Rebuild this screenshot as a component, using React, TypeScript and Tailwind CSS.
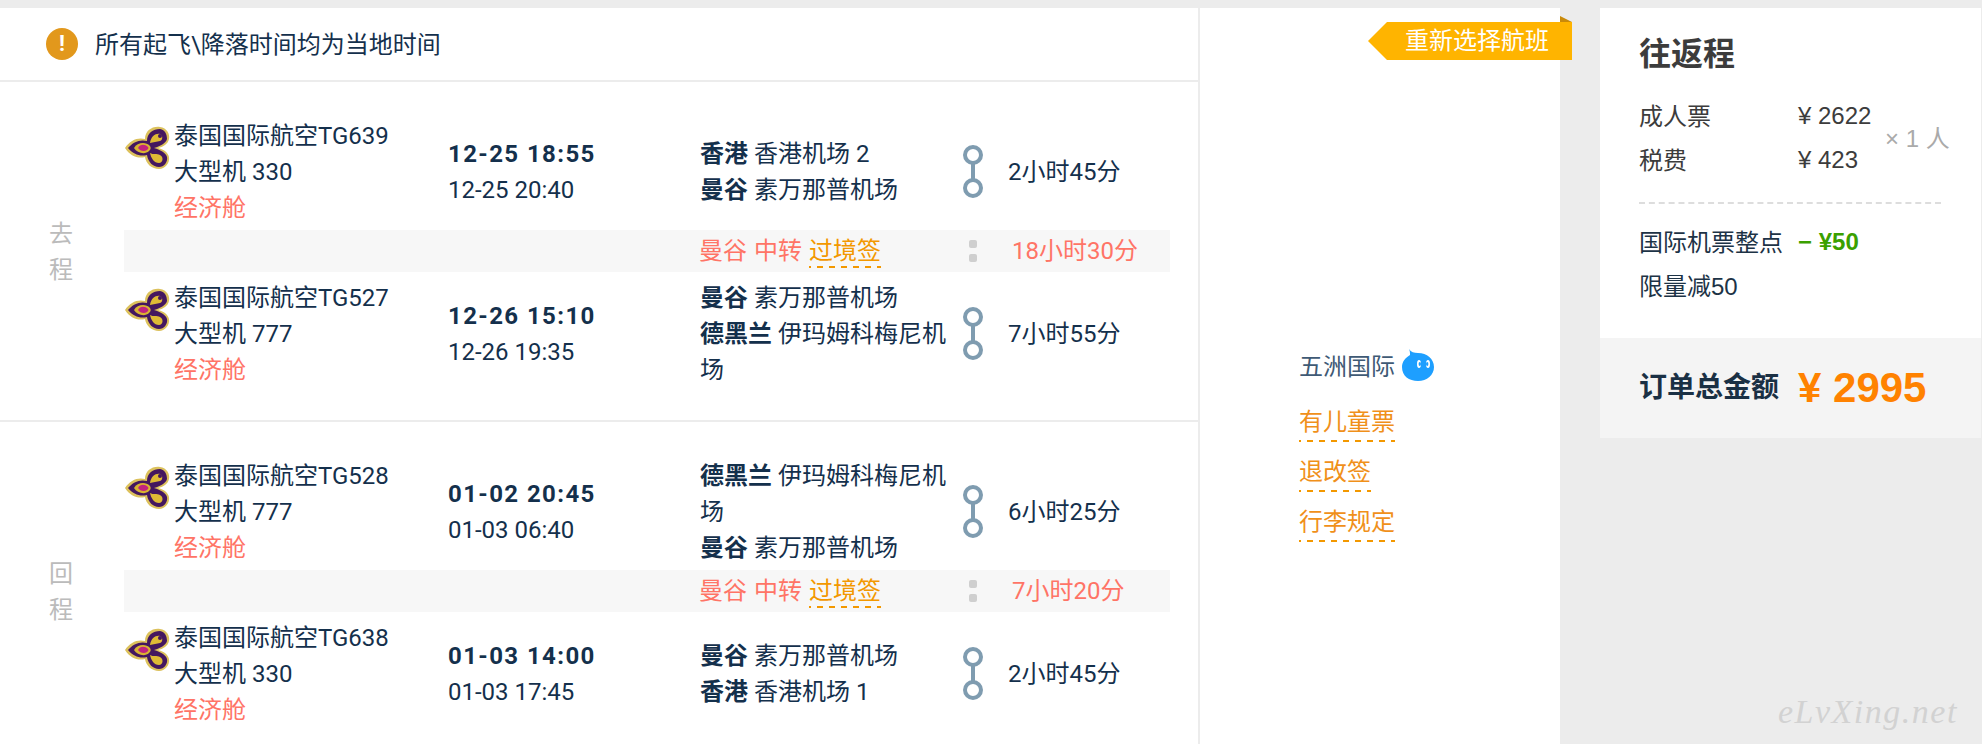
import React from "react";

const cjk = "font-['Roboto','Noto_Sans_CJK_SC',sans-serif]";
const navy = "text-[#14304c]";

const ThaiLogo = () => (
  <svg width="45" height="44" viewBox="0 0 45 44" className="mt-[9px] ml-[1px] shrink-0 blur-[0.5px]">
    <path
      d="M0 22C5 14 13 11 20 13C20 5 27 0 35 1C42 2 45 8 44 13C43 18 38 21 33 22C38 23 43 26 44 31C45 37 40 43 34 43C27 43 21 38 20 31C13 33 5 30 0 22Z"
      fill="#dcc15c"
    />
    <path
      d="M3 22C8 16 15 13 22 15C22 7 28 3 35 3C40 4 42 8 42 13C41 17 36 20 29 22C36 24 41 27 42 31C43 36 39 41 34 41C28 41 23 36 22 29C15 31 8 28 3 22Z"
      fill="#44175f"
    />
    <path d="M25 17C26 10 31 7 35 8C38 9 38 14 35 15C32 16 28 16 25 17Z" fill="#dfba35" />
    <circle cx="35" cy="10" r="2" fill="#44175f" />
    <path d="M25 27C28 29 32 27 35 29C39 31 38 37 34 37C29 37 26 32 25 27Z" fill="#dfba35" />
    <path d="M9 22C12 17 20 15 25 20C26 22 26 23 24 25C20 29 12 27 9 22Z" fill="#d9b331" />
    <path d="M13 22C15 18 20 18 23 21C24 22 23 23 22 24C19 26 15 25 13 22Z" fill="#c2247e" />
  </svg>
);

const Connector = () => (
  <svg width="20" height="53" viewBox="0 0 20 53" className="shrink-0 blur-[0.3px]">
    <circle cx="10" cy="10" r="8" fill="none" stroke="#7f9cb0" strokeWidth="4" />
    <circle cx="10" cy="43" r="8" fill="none" stroke="#7f9cb0" strokeWidth="4" />
    <path d="M10 18V35" stroke="#7f9cb0" strokeWidth="4" />
  </svg>
);

const Dash = () => (
  <div className="h-[2px] bg-[repeating-linear-gradient(90deg,#f39800_0,#f39800_2px,transparent_2px,transparent_8px,#f39800_8px,#f39800_12px)]" />
);

type Leg = {
  flight: string;
  plane: string;
  dep: string;
  arr: string;
  from: [string, string];
  to: [string, string];
  duration: string;
};

const LegRow = ({ leg }: { leg: Leg }) => (
  <div className={`flex h-[108px] ${navy}`}>
    <div className="flex w-[324px]">
      <div className="w-[50px] shrink-0">
        <ThaiLogo />
      </div>
      <div className="translate-y-px leading-[36px]">
        <div>泰国国际航空{leg.flight}</div>
        <div>大型机 {leg.plane}</div>
        <div className="text-[#ff7466]">经济舱</div>
      </div>
    </div>
    <div className="flex w-[252px] translate-y-px flex-col justify-center leading-[36px]">
      <div className="font-bold tracking-[1.4px]">{leg.dep}</div>
      <div>{leg.arr}</div>
    </div>
    <div className="flex w-[252px] translate-y-px flex-col justify-center leading-[36px]">
      <div>
        <b className="font-semibold">{leg.from[0]}</b> {leg.from[1]}
      </div>
      <div>
        <b className="font-semibold">{leg.to[0]}</b> {leg.to[1]}
      </div>
    </div>
    <div className="ml-[11px] flex items-center">
      <Connector />
    </div>
    <div className="ml-[25px] flex translate-y-px items-center">{leg.duration}</div>
  </div>
);

const Transfer = ({ duration }: { duration: string }) => (
  <div className="mt-[5px] mb-[7px] flex h-[42px] items-center bg-[#f7f7f7] text-[#ff7466]">
    <div className="ml-[575px] flex w-[253px]">
      <span className="mr-[7px]">曼谷</span>
      <span className="mr-[7px]">中转</span>
      <span className="relative text-[#f39800]">
        过境签
        <div className="absolute left-0 right-0 top-[33px]">
          <Dash />
        </div>
      </span>
    </div>
    <div className="ml-[17px] flex w-[8px] flex-col gap-[6px]">
      <div className="h-[8px] w-[8px] rounded-[2px] bg-[#cfcfcf]" />
      <div className="h-[8px] w-[8px] rounded-[2px] bg-[#cfcfcf]" />
    </div>
    <div className="ml-[35px]">{duration}</div>
  </div>
);

const Section = ({ label, legs, transfer }: { label: string[]; legs: Leg[]; transfer: string }) => (
  <div className="flex border-b-2 border-[#ececec] pt-[35px] pb-[33px]">
    <div className="flex w-[124px] flex-col items-center justify-center pr-[2px] leading-[36px] text-[#bbbbbb]">
      {label.map((c) => (
        <div key={c}>{c}</div>
      ))}
    </div>
    <div className="w-[1046px]">
      <LegRow leg={legs[0]} />
      <Transfer duration={transfer} />
      <LegRow leg={legs[1]} />
    </div>
  </div>
);

const outbound: Leg[] = [
  {
    flight: "TG639",
    plane: "330",
    dep: "12-25 18:55",
    arr: "12-25 20:40",
    from: ["香港", "香港机场 2"],
    to: ["曼谷", "素万那普机场"],
    duration: "2小时45分",
  },
  {
    flight: "TG527",
    plane: "777",
    dep: "12-26 15:10",
    arr: "12-26 19:35",
    from: ["曼谷", "素万那普机场"],
    to: ["德黑兰", "伊玛姆科梅尼机场"],
    duration: "7小时55分",
  },
];

const inbound: Leg[] = [
  {
    flight: "TG528",
    plane: "777",
    dep: "01-02 20:45",
    arr: "01-03 06:40",
    from: ["德黑兰", "伊玛姆科梅尼机场"],
    to: ["曼谷", "素万那普机场"],
    duration: "6小时25分",
  },
  {
    flight: "TG638",
    plane: "330",
    dep: "01-03 14:00",
    arr: "01-03 17:45",
    from: ["曼谷", "素万那普机场"],
    to: ["香港", "香港机场 1"],
    duration: "2小时45分",
  },
];

const links = ["有儿童票", "退改签", "行李规定"];

export default function App() {
  return (
    <div className={`relative flex h-[744px] w-[1982px] overflow-hidden bg-[#ececec] pt-[8px] text-[24px] ${cjk}`}>
      <div className="flex w-[1560px] bg-white">
        <div className="w-[1200px] border-r-2 border-[#ececec]">
          <div className={`flex h-[74px] items-center border-b-2 border-[#ececec] pl-[46px] ${navy}`}>
            <div className="flex h-[32px] w-[32px] items-center justify-center rounded-full bg-[#e2981c] text-[22px] font-bold leading-none text-white">
              !
            </div>
            <span className="ml-[17px] translate-y-px">所有起飞\降落时间均为当地时间</span>
          </div>
          <Section label={["去", "程"]} legs={outbound} transfer="18小时30分" />
          <Section label={["回", "程"]} legs={inbound} transfer="7小时20分" />
        </div>

        <div className="relative w-[360px] pl-[99px] pt-[341px]">
          <div className="absolute right-[-12px] top-[8px]">
            <svg width="204" height="44" viewBox="0 0 204 44" className="block">
              <path d="M192 0L204 6H192Z" fill="#c98a0a" />
              <path d="M0 25L19 6H204V44H19Z" fill="#ffb400" />
            </svg>
            <span className="absolute left-[37px] top-[7px] whitespace-nowrap leading-[36px] text-white">
              重新选择航班
            </span>
          </div>
          <div className="flex h-[36px] items-center leading-[36px] text-[#3f5a75]">
            五洲国际
            <svg width="33" height="32" viewBox="0 0 33 32" className="mb-[4px] ml-[6px]">
              <path
                d="M8 0C10 3 13 4 17 4C26 4 33 10 33 18C33 26 26 32 17 32C8 32 1 27 1 18C1 13 4 9 9 6C9 4 9 2 8 0Z"
                fill="#1e9fff"
              />
              <ellipse cx="18" cy="15" rx="2" ry="4" fill="#fff" />
              <ellipse cx="18.8" cy="15" rx="1.2" ry="2" fill="#1e9fff" />
              <ellipse cx="27" cy="15" rx="2" ry="4" fill="#fff" />
              <ellipse cx="26.2" cy="15" rx="1.2" ry="2" fill="#1e9fff" />
            </svg>
          </div>
          <div className="mt-[19px] flex flex-col items-start gap-[12px]">
            {links.map((l) => (
              <div key={l} className="leading-[36px] text-[#f0901a]">
                {l}
                <Dash />
              </div>
            ))}
          </div>
        </div>
      </div>

      <div className="ml-[40px] w-[381px] font-['Liberation_Sans','Noto_Sans_CJK_SC',sans-serif]">
        <div className="h-[330px] bg-white pl-[39px] pt-[24px] text-[#3c3c3c]">
          <div className="text-[32px] font-bold leading-[44px]">往返程</div>
          <div className="mt-[23px] flex items-center">
            <div className="w-[246px]">
              <div className="flex leading-[36px]">
                <span className="w-[159px]">成人票</span>
                <span className="-translate-y-px">¥ 2622</span>
              </div>
              <div className="mt-[8px] flex leading-[36px]">
                <span className="w-[159px]">税费</span>
                <span className="-translate-y-px">¥ 423</span>
              </div>
            </div>
            <div className="leading-[36px] text-[#aaaaaa]">× 1 人</div>
          </div>
          <div className="mt-[23px] h-[2px] w-[302px] border-t-2 border-dashed border-[#dddddd]" />
          <div className="mt-[21px] flex leading-[36px] text-[#1d3346]">
            <span className="w-[159px]">国际机票整点</span>
            <span className="-translate-y-px font-bold text-[#3ba000]">− ¥50</span>
          </div>
          <div className="mt-[8px] leading-[36px] text-[#1d3346]">限量减50</div>
        </div>
        <div className="flex h-[100px] items-center bg-[#f4f4f4] pl-[39px]">
          <span className="w-[159px] text-[28px] font-bold text-[#1a3044]">订单总金额</span>
          <span className="text-[42px] font-bold leading-none text-[#ff8200]">¥ 2995</span>
        </div>
      </div>

      <div className="absolute left-[1778px] top-[692px] font-['Liberation_Serif',serif] text-[34px] italic leading-[40px] tracking-[1.5px] text-[#d2d2d2]">
        eLvXing.net
      </div>
    </div>
  );
}
